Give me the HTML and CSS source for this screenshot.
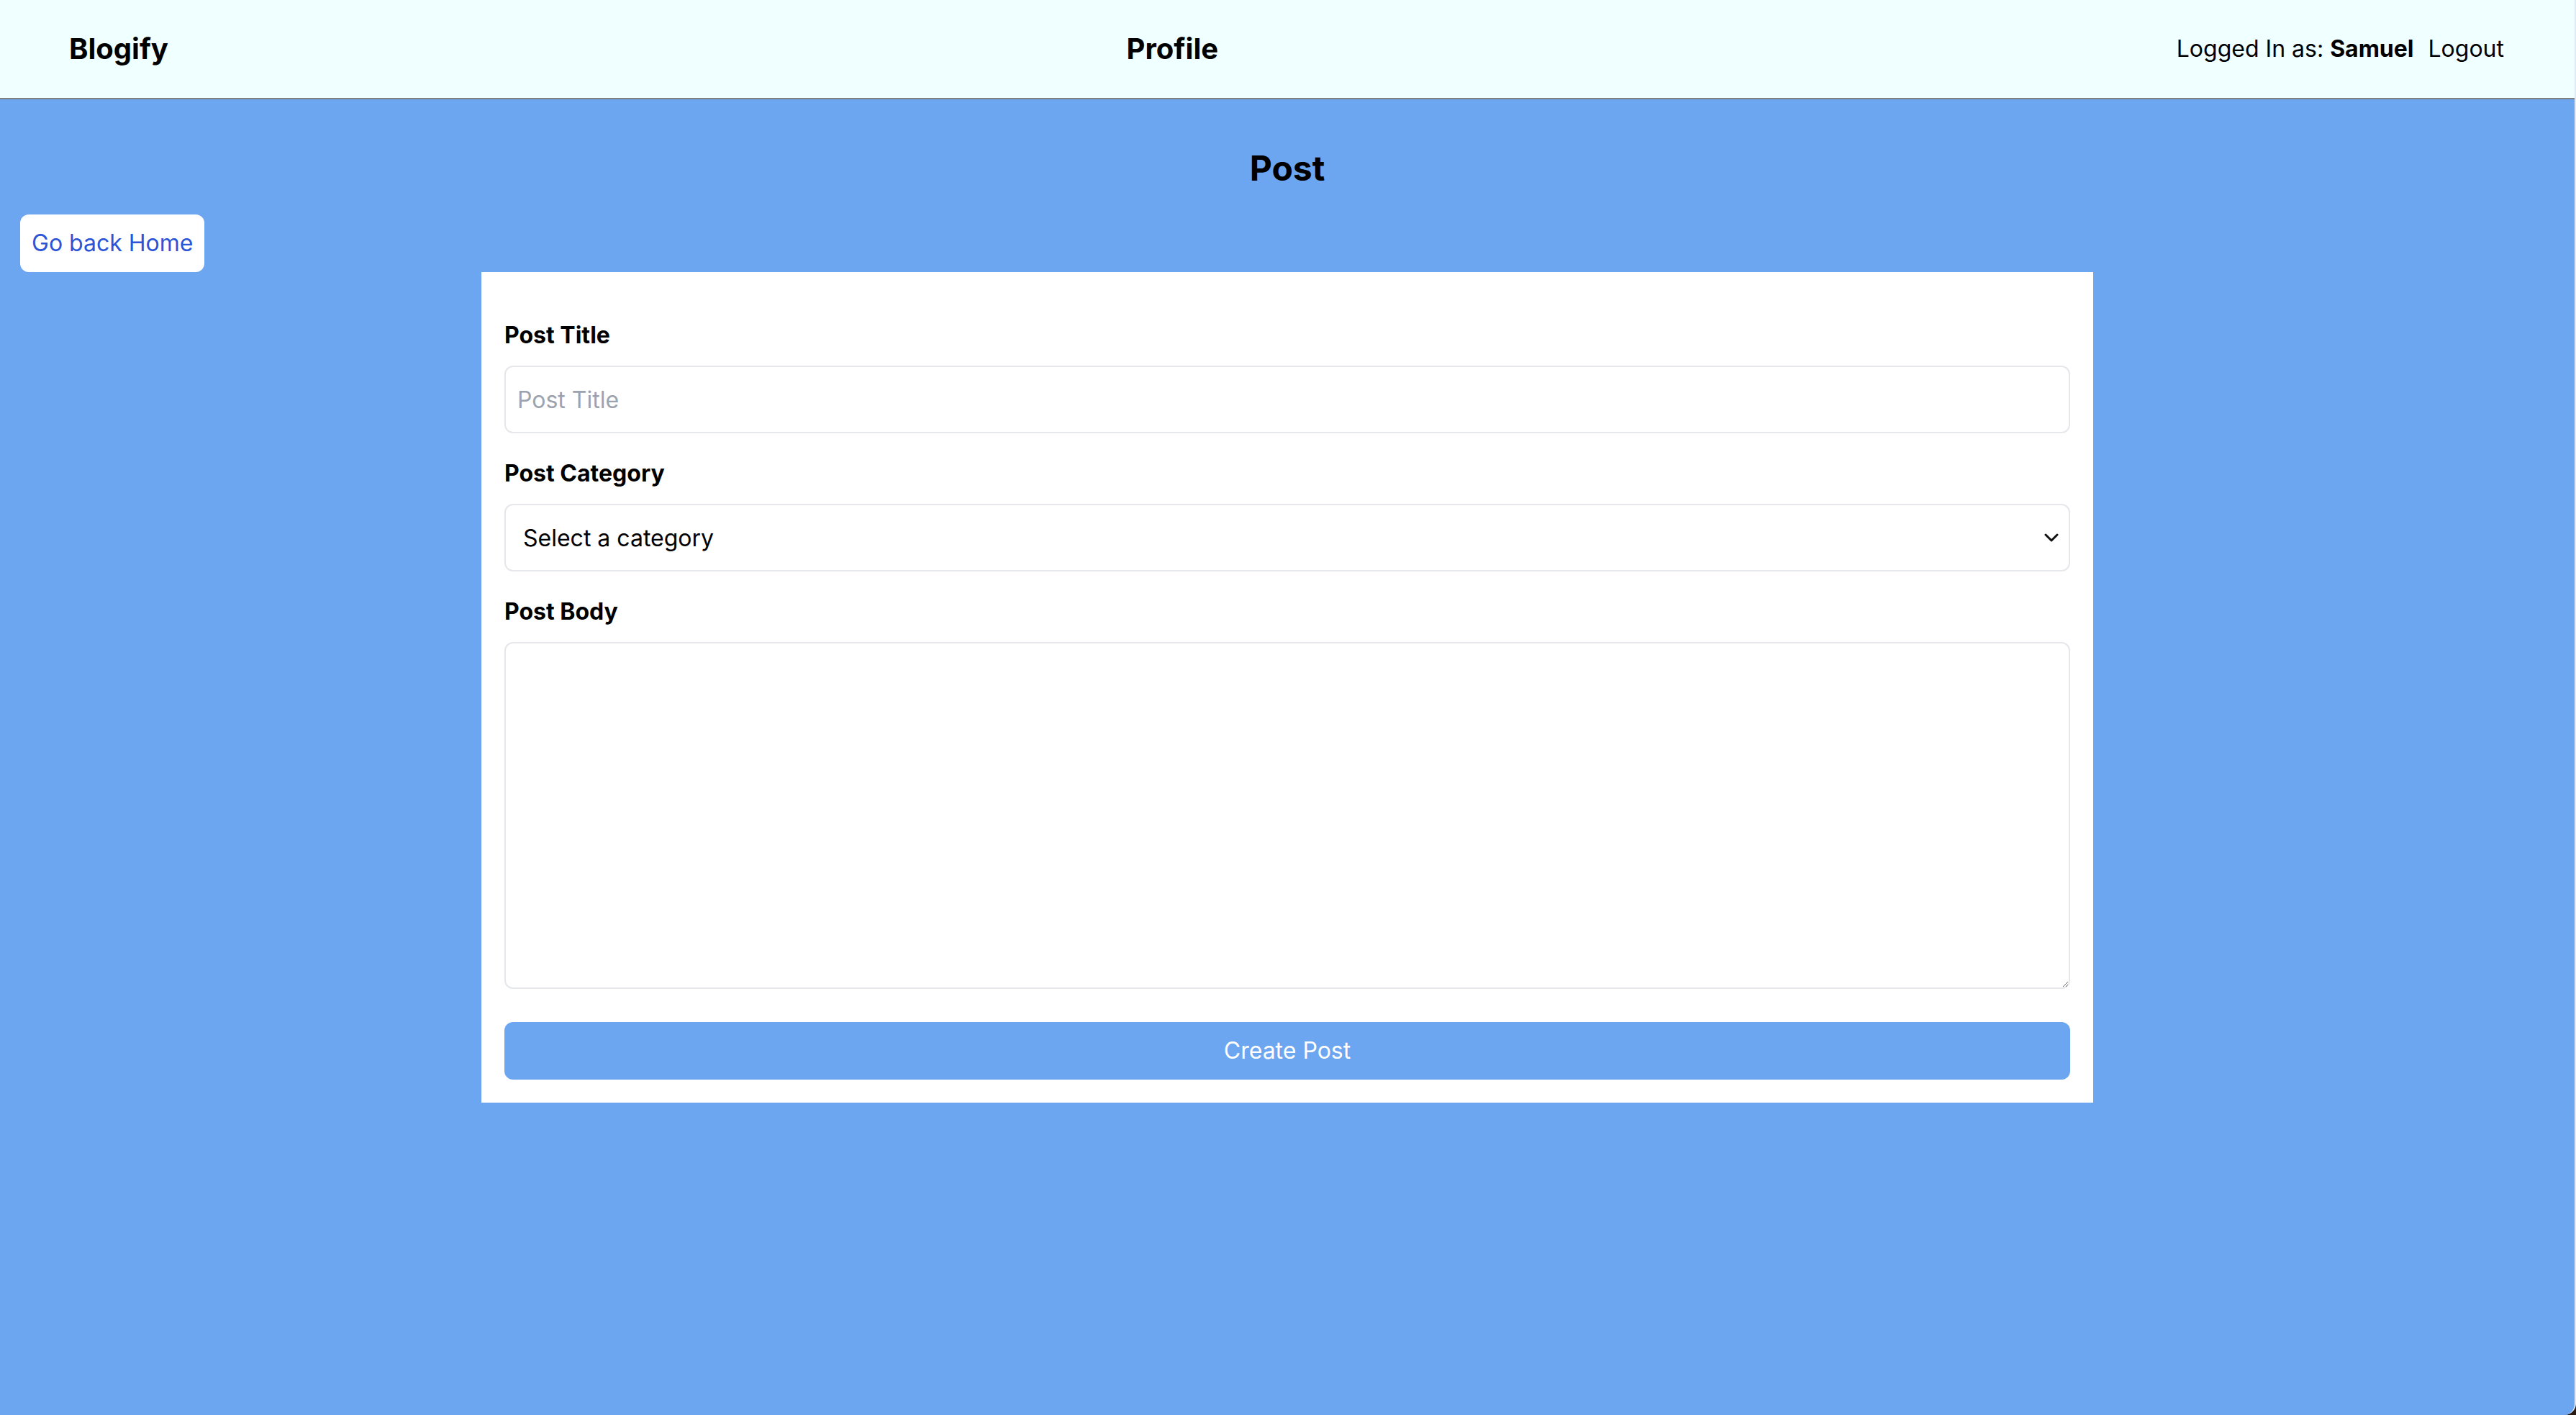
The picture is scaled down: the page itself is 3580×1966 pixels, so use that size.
FILE: index.html
```html
<!DOCTYPE html>
<html lang="en">
<head>
<meta charset="utf-8">
<title>Blogify - Post</title>
<link rel="stylesheet" href="styles.css">
</head>
<body>
<header class="topbar">
  <div class="brand">Blogify</div>
  <div class="page-name">Profile</div>
  <div class="user">
    <span class="user-label">Logged In as: <strong>Samuel</strong></span>
    <a class="logout" href="#">Logout</a>
  </div>
</header>
<main class="main">
  <h1 class="main-title">Post</h1>
  <div class="back-row">
    <a class="back-btn" href="#">Go back Home</a>
  </div>
  <form class="card">
    <div class="field">
      <label class="field-label" for="title">Post Title</label>
      <input class="control" id="title" type="text" placeholder="Post Title">
    </div>
    <div class="field">
      <label class="field-label" for="category">Post Category</label>
      <div class="select-wrap">
        <select class="control select" id="category">
          <option>Select a category</option>
        </select>
        <svg class="chevron" width="20" height="14" viewBox="0 0 20 14" aria-hidden="true">
          <path d="M2 3 L10 11 L18 3" fill="none" stroke="#111" stroke-width="3" stroke-linecap="round" stroke-linejoin="round"/>
        </svg>
      </div>
    </div>
    <div class="field">
      <label class="field-label" for="body">Post Body</label>
      <textarea class="control textarea" id="body"></textarea>
    </div>
    <button class="submit" type="button">Create Post</button>
  </form>
</main>
</body>
</html>
```
FILE: styles.css
```css
* {
  box-sizing: border-box;
}

html {
  height: 100%;
  background: #2a1a14;
}

body {
  margin: 0;
  min-height: 100%;
  background: #6ca5f0;
  border-right: 2px solid #dfe9f8;
  border-bottom-right-radius: 16px;
  font-family: Inter, "Liberation Sans", sans-serif;
  color: #000;
  display: flex;
  flex-direction: column;
}

.topbar {
  height: 138px;
  background: #f0ffff;
  border-bottom: 2px solid #808080;
  display: flex;
  align-items: center;
  justify-content: space-between;
  padding: 0 98px 0 96px;
}

.brand,
.page-name {
  font-size: 40px;
  line-height: 56px;
  font-weight: 700;
}

.user {
  display: flex;
  align-items: center;
  gap: 20px;
  font-size: 32px;
  line-height: 48px;
}

.user strong {
  font-weight: 700;
}

.logout {
  color: #000;
  text-decoration: none;
}

.main {
  flex: 1;
  display: flex;
  flex-direction: column;
}

.main-title {
  margin: 64px 0 0;
  font-size: 48px;
  line-height: 64px;
  font-weight: 700;
  text-align: center;
}

.back-row {
  display: flex;
  margin: 32px 0 0 28px;
}

.back-btn {
  display: block;
  background: #fff;
  color: #2b55d6;
  font-size: 32px;
  line-height: 48px;
  padding: 16px 16px;
  border-radius: 12px;
  text-decoration: none;
}

.card {
  width: 2240px;
  margin: 0 auto;
  background: #fff;
  padding: 64px 32px 32px;
  display: flex;
  flex-direction: column;
}

.field {
  display: flex;
  flex-direction: column;
  margin-bottom: 32px;
}

.field-label {
  font-size: 32px;
  line-height: 48px;
  font-weight: 700;
  margin-bottom: 18px;
}

.control {
  display: block;
  width: 100%;
  height: 94px;
  border: 2px solid #e5e7eb;
  border-radius: 12px;
  background: #fff;
  padding: 0 16px;
  font-family: Inter, "Liberation Sans", sans-serif;
  font-size: 32px;
  color: #000;
  outline: none;
}

.control::placeholder {
  color: #9ca3af;
}

.select-wrap {
  position: relative;
}

.select {
  appearance: none;
  -webkit-appearance: none;
  padding-left: 24px;
}

.chevron {
  position: absolute;
  right: 16px;
  top: 40px;
  width: 20px;
  height: 14px;
  pointer-events: none;
}

.textarea {
  height: 482px;
  padding: 16px;
  line-height: 48px;
  resize: vertical;
}

.field:last-of-type {
  margin-bottom: 46px;
}

.submit {
  display: block;
  width: 100%;
  height: 80px;
  border: none;
  border-radius: 12px;
  background: #6ca5f0;
  color: #fff;
  font-family: Inter, "Liberation Sans", sans-serif;
  font-size: 32px;
  line-height: 48px;
  padding: 16px;
}
```
